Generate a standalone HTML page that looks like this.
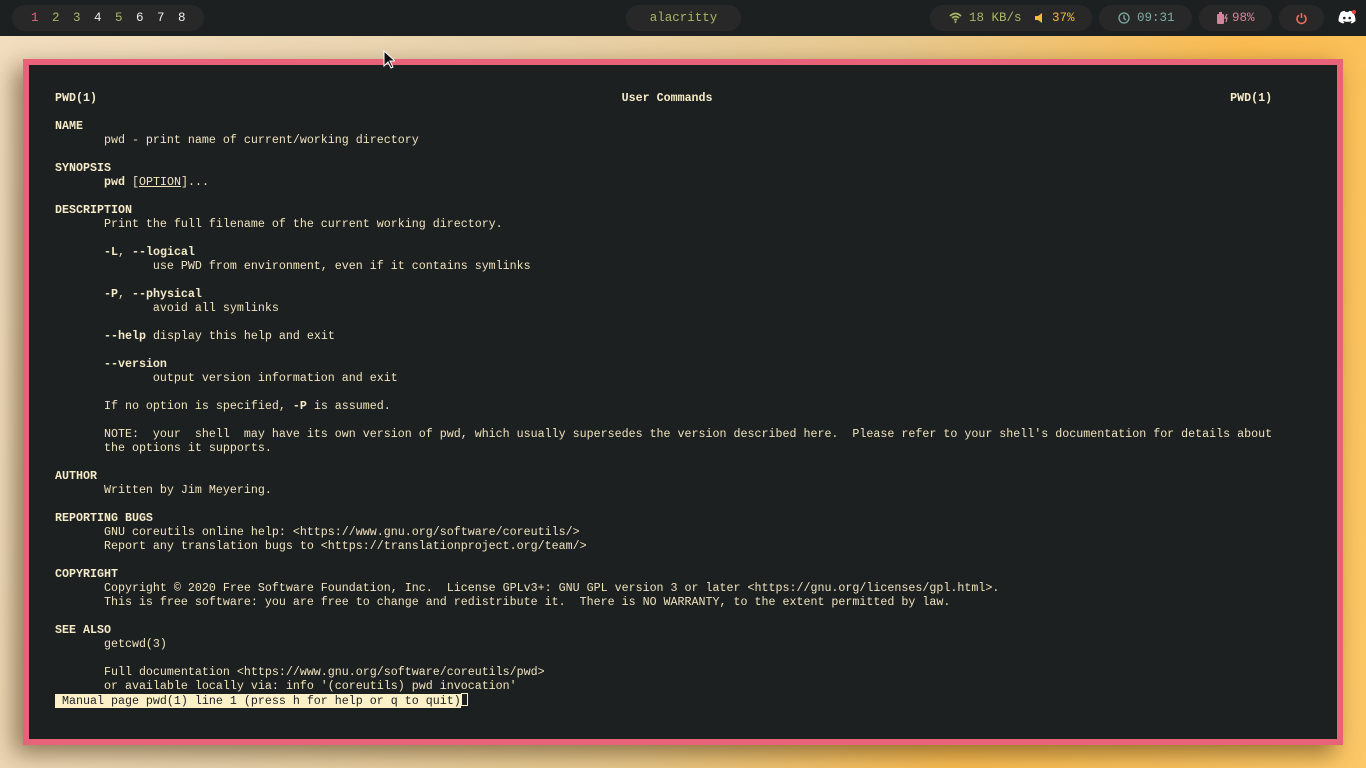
<!DOCTYPE html>
<html><head><meta charset="utf-8"><style>
*{margin:0;padding:0;box-sizing:border-box}
body{width:1366px;height:768px;overflow:hidden;position:relative;font-family:"Liberation Mono","DejaVu Sans Mono",monospace;
background:linear-gradient(112deg,#f3dfc0 0%,#e9d3ae 30%,#e8c98e 55%,#fbbd52 75%,#fcc868 100%);}
.bar{position:absolute;left:0;top:0;width:1366px;height:36px;background:#1d2021;}
.pill{position:absolute;top:5px;height:26px;border-radius:13px;background:#282828;font-size:12.5px;line-height:26px;color:#ddd;white-space:nowrap}
.ws{position:absolute;top:0}
.win{position:absolute;left:23px;top:59px;width:1320px;height:686px;background:#e8637a;box-shadow:-8px 8px 22px rgba(60,40,10,.55)}
.inner{position:absolute;left:6px;top:6px;right:6px;bottom:6px;background:#1d2021}
pre{position:absolute;left:55px;top:91px;font-family:"Liberation Mono","DejaVu Sans Mono",monospace;font-size:11.67px;line-height:14px;color:#f0e3bd;white-space:pre}
b{font-weight:bold;color:#f6ebc8}
u{text-decoration:underline}
.st{background:#fbf0c8;color:#1d2021;}
.cur{display:inline-block;width:7px;height:13px;border:1px solid #fbf0c8;vertical-align:-2px}
</style></head><body>
<div class="bar">
 <div class="pill" style="left:12px;width:192px;">
  <span class="ws" style="left:19px;color:#e8637a">1</span><span class="ws" style="left:40px;color:#a9b665">2</span><span class="ws" style="left:61px;color:#a9b665">3</span><span class="ws" style="left:82px;color:#eee">4</span><span class="ws" style="left:103px;color:#a9b665">5</span><span class="ws" style="left:124px;color:#eee">6</span><span class="ws" style="left:145px;color:#eee">7</span><span class="ws" style="left:166px;color:#eee">8</span></div>
 <div class="pill" style="left:626px;width:115px;text-align:center;color:#a9b665">alacritty</div>
 <div class="pill" style="left:930px;width:162px;color:#a9b665">
  <svg style="position:absolute;left:19px;top:7px" width="13" height="11" viewBox="0 0 13 11"><path d="M1 4Q6.5-1 12 4M3 6Q6.5 3 10 6M5 8Q6.5 7 8 8" stroke="#a9b665" stroke-width="1.6" fill="none"/><circle cx="6.5" cy="10" r="1" fill="#a9b665"/></svg>
  <span style="position:absolute;left:39px">18 KB/s</span>
  <svg style="position:absolute;left:104px;top:8px" width="10" height="10" viewBox="0 0 10 10"><path d="M1 3h3l4-3v10l-4-3H1z" fill="#f5b93f"/></svg>
  <span style="position:absolute;left:122px;color:#f5b93f">37%</span></div>
 <div class="pill" style="left:1099px;width:93px;color:#7daea3">
  <svg style="position:absolute;left:19px;top:7px" width="12" height="12" viewBox="0 0 12 12"><circle cx="6" cy="6" r="5" stroke="#7daea3" stroke-width="1.3" fill="none"/><path d="M6 3v3.5l2 1.5" stroke="#7daea3" stroke-width="1.3" fill="none"/></svg>
  <span style="position:absolute;left:38px">09:31</span></div>
 <div class="pill" style="left:1199px;width:73px;color:#d3869b">
  <svg style="position:absolute;left:17px;top:7px" width="14" height="12" viewBox="0 0 14 12"><rect x="1" y="2" width="7" height="10" rx="1" fill="#d3869b"/><rect x="3" y="0" width="3" height="2" fill="#d3869b"/><path d="M11 2l-2 4h2l-1 4" stroke="#d3869b" stroke-width="1.2" fill="none"/></svg>
  <span style="position:absolute;left:33px">98%</span></div>
 <div class="pill" style="left:1279px;width:45px;">
  <svg style="position:absolute;left:16px;top:7px" width="13" height="13" viewBox="0 0 13 13"><path d="M4 3.2A4.5 4.5 0 1 0 9 3.2" stroke="#ea6962" stroke-width="1.6" fill="none"/><path d="M6.5 1v5" stroke="#ea6962" stroke-width="1.6"/></svg></div>
 <svg style="position:absolute;left:1338px;top:10px" width="18" height="15" viewBox="0 0 18 15"><path d="M3 2Q6 0.5 7 1L7.5 2h3L11 1q1 -0.5 4 1q2.5 4 2.5 9q-2 2-4 2.5l-1-1.5 1.5-.8-.3-.3q-4 2-8.4 0l-.3.3 1.5.8-1 1.5Q2.5 13 .5 11Q.5 6 3 2z" fill="#fff"/><circle cx="6.3" cy="8" r="1.3" fill="#1d2021"/><circle cx="11.7" cy="8" r="1.3" fill="#1d2021"/><circle cx="16" cy="2" r="2" fill="#ea4040"/></svg>
</div>
<div class="win"><div class="inner"></div></div>
<pre><b>PWD(1)</b>                                                                           <b>User Commands</b>                                                                          <b>PWD(1)</b>

<b>NAME</b>
       pwd - print name of current/working directory

<b>SYNOPSIS</b>
       <b>pwd</b> [<u>OPTION</u>]...

<b>DESCRIPTION</b>
       Print the full filename of the current working directory.

       <b>-L</b>, <b>--logical</b>
              use PWD from environment, even if it contains symlinks

       <b>-P</b>, <b>--physical</b>
              avoid all symlinks

       <b>--help</b> display this help and exit

       <b>--version</b>
              output version information and exit

       If no option is specified, <b>-P</b> is assumed.

       NOTE:  your  shell  may have its own version of pwd, which usually supersedes the version described here.  Please refer to your shell's documentation for details about
       the options it supports.

<b>AUTHOR</b>
       Written by Jim Meyering.

<b>REPORTING BUGS</b>
       GNU coreutils online help: &lt;https://www.gnu.org/software/coreutils/&gt;
       Report any translation bugs to &lt;https://translationproject.org/team/&gt;

<b>COPYRIGHT</b>
       Copyright © 2020 Free Software Foundation, Inc.  License GPLv3+: GNU GPL version 3 or later &lt;https://gnu.org/licenses/gpl.html&gt;.
       This is free software: you are free to change and redistribute it.  There is NO WARRANTY, to the extent permitted by law.

<b>SEE ALSO</b>
       getcwd(3)

       Full documentation &lt;https://www.gnu.org/software/coreutils/pwd&gt;
       or available locally via: info '(coreutils) pwd invocation'
<span class="st"> Manual page pwd(1) line 1 (press h for help or q to quit)</span><span class="cur"></span></pre>
<svg style="position:absolute;left:383px;top:50px" width="12" height="19" viewBox="0 0 12 19"><path d="M1 1v15l4-4 3 6 2-1-3-6h5z" fill="#111" stroke="#fff" stroke-width="1"/></svg>
</body></html>
